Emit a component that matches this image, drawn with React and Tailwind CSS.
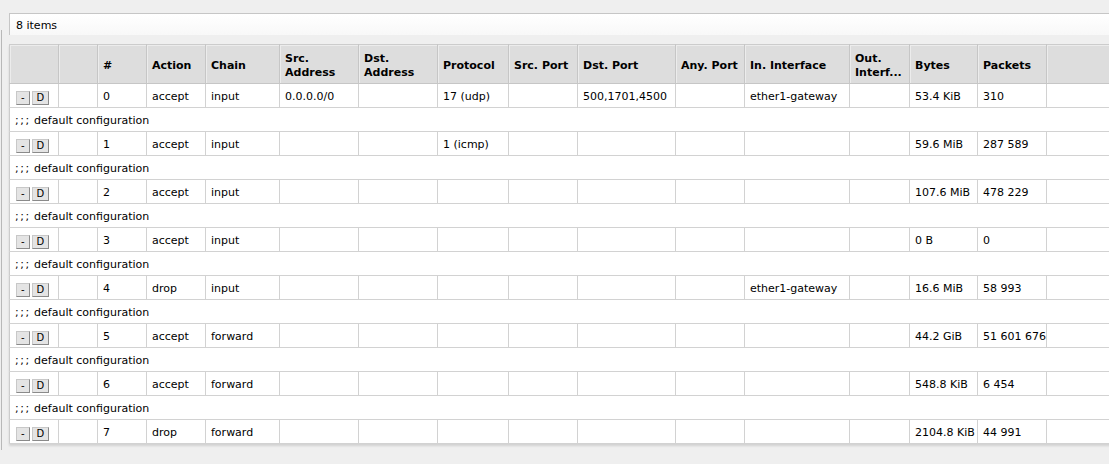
const columns = [
  { key: "btn", label: "", width: 49 },
  { key: "blank", label: "", width: 39 },
  { key: "num", label: "#", width: 49 },
  { key: "action", label: "Action", width: 59 },
  { key: "chain", label: "Chain", width: 74 },
  { key: "src", label: ["Src.", "Address"], width: 79 },
  { key: "dst", label: ["Dst.", "Address"], width: 79 },
  { key: "proto", label: "Protocol", width: 71 },
  { key: "sport", label: "Src. Port", width: 69 },
  { key: "dport", label: "Dst. Port", width: 98 },
  { key: "aport", label: "Any. Port", width: 69 },
  { key: "inif", label: "In. Interface", width: 105 },
  { key: "outif", label: ["Out.", "Interf..."], width: 60 },
  { key: "bytes", label: "Bytes", width: 68 },
  { key: "packets", label: "Packets", width: 69 },
  { key: "rest", label: "", width: 103 }
];

const tableWidth = columns.reduce((sum, col) => sum + col.width, 0);

const rules = [
  { num: 0, action: "accept", chain: "input", src: "0.0.0.0/0", proto: "17 (udp)", dport: "500,1701,4500", inif: "ether1-gateway", bytes: "53.4 KiB", packets: "310" },
  { num: 1, action: "accept", chain: "input", proto: "1 (icmp)", bytes: "59.6 MiB", packets: "287 589" },
  { num: 2, action: "accept", chain: "input", bytes: "107.6 MiB", packets: "478 229" },
  { num: 3, action: "accept", chain: "input", bytes: "0 B", packets: "0" },
  { num: 4, action: "drop", chain: "input", inif: "ether1-gateway", bytes: "16.6 MiB", packets: "58 993" },
  { num: 5, action: "accept", chain: "forward", bytes: "44.2 GiB", packets: "51 601 676" },
  { num: 6, action: "accept", chain: "forward", bytes: "548.8 KiB", packets: "6 454" },
  { num: 7, action: "drop", chain: "forward", bytes: "2104.8 KiB", packets: "44 991" }
];

function SmallButton({ children }) {
  return (
    <span className="inline-flex h-[14px] items-center justify-center border border-t-[#c8c8c8] border-l-[#c8c8c8] border-r-[#8a8a8a] border-b-[#8a8a8a] bg-[#e4e4e4] px-[4px] text-[10px] leading-none text-black">
      {children}
    </span>
  );
}

function RuleRow({ rule }) {
  return (
    <tr className="h-[24px] bg-white">
      {columns.map((col) => (
        <td
          key={col.key}
          className="overflow-hidden whitespace-nowrap border-b border-r border-[#d2d2d2] px-[5px] pt-[4px] pb-0 align-middle"
        >
          {col.key === "btn" ? (
            <span className="flex gap-[2px] pl-[1px]">
              <SmallButton>-</SmallButton>
              <SmallButton>D</SmallButton>
            </span>
          ) : (
            rule[col.key] ?? ""
          )}
        </td>
      ))}
    </tr>
  );
}

function CommentRow() {
  return (
    <tr className="h-[24px] bg-white">
      <td colSpan={columns.length} className="whitespace-nowrap border-b border-[#d2d2d2] px-[5px] pt-[4px] pb-0 align-middle">
        <span className="tracking-[1.5px]">;;;</span> default configuration
      </td>
    </tr>
  );
}

export default function App() {
  return (
    <div
      className="flex h-[464px] w-[1109px] overflow-hidden bg-[#efefef] text-[11px] text-black"
      style={{ fontFamily: '"DejaVu Sans", Verdana, sans-serif' }}
    >
      <div className="ml-[1px] mt-[30px] h-[420px] w-[1px] shrink-0 bg-[#b8b8b8]" />
      <div className="ml-[7px] flex min-w-0 flex-1 flex-col">
        <div className="mt-[13px] flex h-[22px] items-center border-l border-t border-[#c6c6c6] bg-gradient-to-b from-white to-[#f8f8f8] pl-[6px] pt-[3px]">
          8 items
        </div>
        <div className="mt-[9px] shrink-0 shadow-[0_2px_2px_rgba(0,0,0,0.12)]" style={{ width: tableWidth + 1 }}>
          <table className="table-fixed border-collapse border-l border-t border-[#cccccc]" style={{ width: tableWidth + 1 }}>
            <colgroup>
              {columns.map((col) => (
                <col key={col.key} style={{ width: col.width }} />
              ))}
            </colgroup>
            <thead>
              <tr className="h-[39px] bg-[#dddddd]">
                {columns.map((col) => (
                  <th
                    key={col.key}
                    className="overflow-hidden whitespace-nowrap border-b border-r border-[#c6c6c6] px-[5px] pt-[4px] pb-0 text-left align-middle font-bold leading-[14px] shadow-[inset_1px_1px_0_#ececec]"
                  >
                    {Array.isArray(col.label) ? (
                      <>
                        {col.label[0]}
                        <br />
                        {col.label[1]}
                      </>
                    ) : (
                      col.label
                    )}
                  </th>
                ))}
              </tr>
            </thead>
            <tbody>
              {rules.map((rule, i) => [
                i > 0 ? <CommentRow key={`c${i}`} /> : null,
                <RuleRow key={`r${i}`} rule={rule} />
              ])}
            </tbody>
          </table>
        </div>
      </div>
    </div>
  );
}
